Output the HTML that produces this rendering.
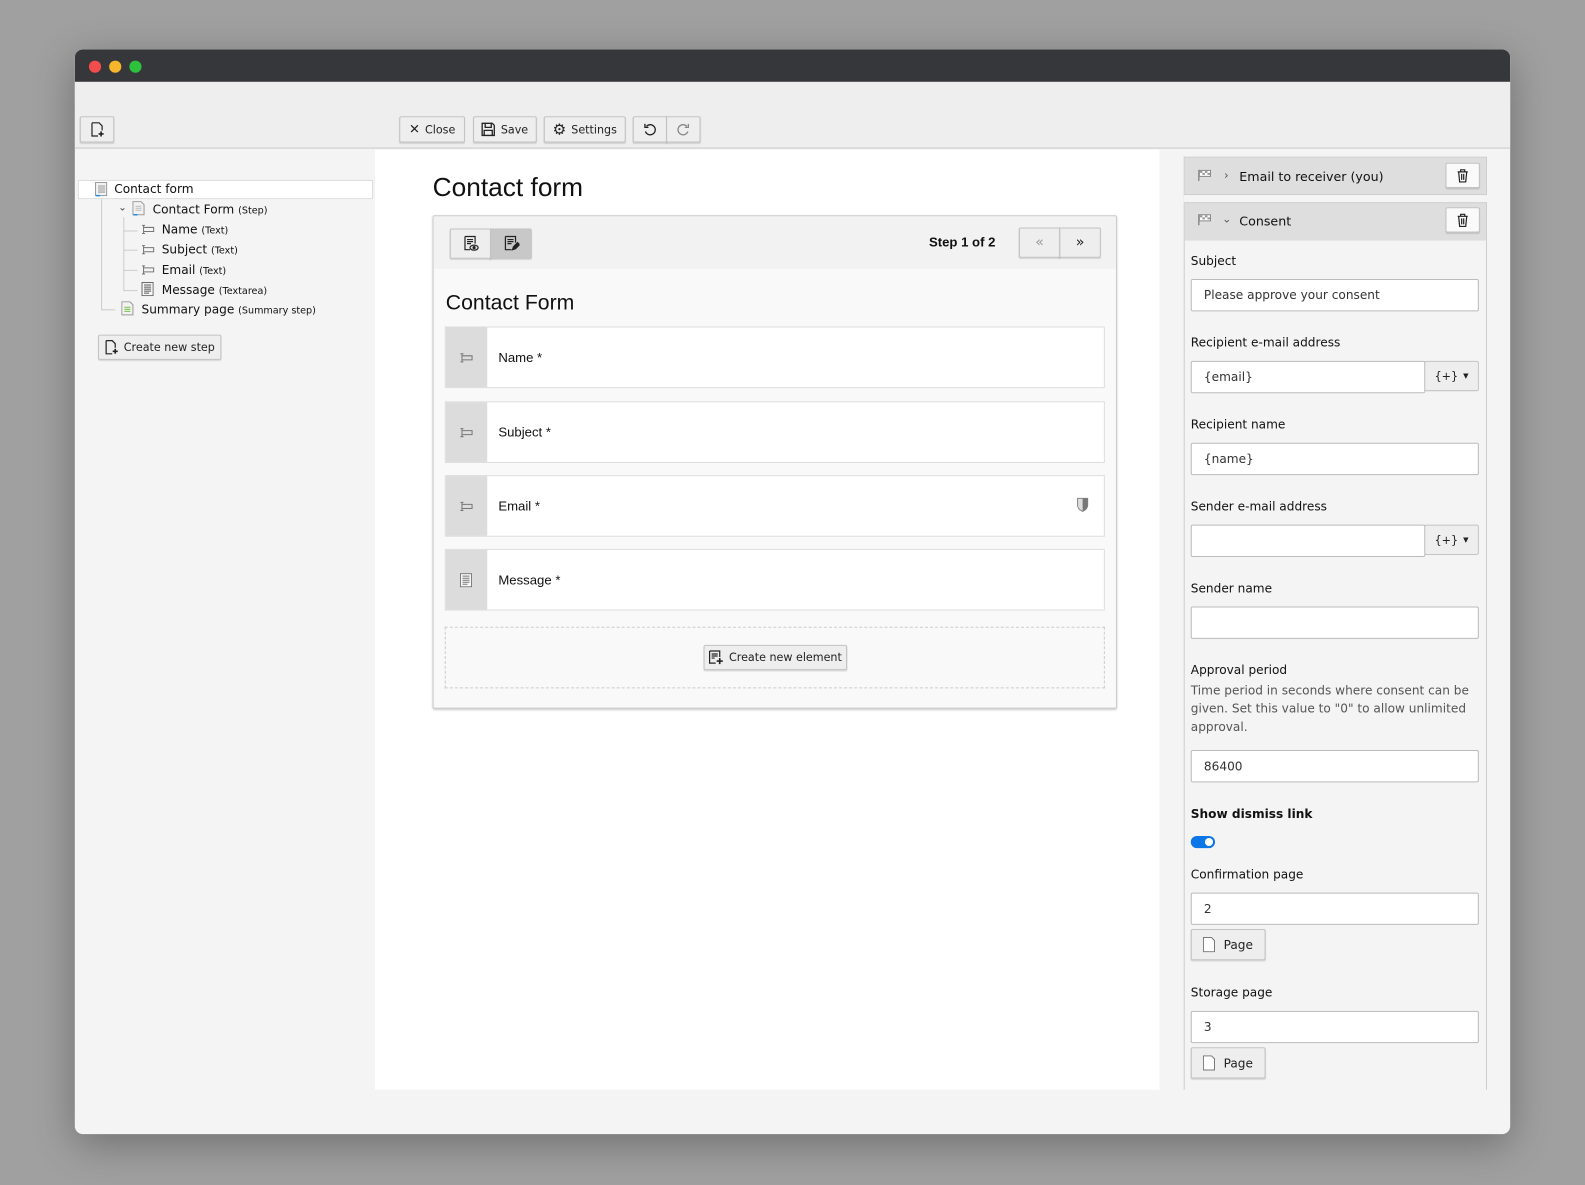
<!DOCTYPE html>
<html><head><meta charset="utf-8"><style>
*{box-sizing:border-box;margin:0;padding:0}
html,body{width:1585px;height:1185px;overflow:hidden;background:#a0a0a0}
#w{position:absolute;left:0;top:0;width:1568px;height:1172px;transform:scale(1.01084);transform-origin:0 0;font-family:"DejaVu Sans","Liberation Sans",sans-serif;font-size:12px;color:#111}
.a{position:absolute}
.win{left:74px;top:49px;width:1420px;height:1073px;border-radius:8px;overflow:hidden;background:#f4f4f4;box-shadow:0 10px 40px rgba(0,0,0,.3)}
.btn{position:absolute;background:#eee;border:1px solid #c3c3c3;border-radius:2px;height:26px;display:flex;align-items:center;justify-content:center;gap:5px;font-size:11px;color:#222;box-shadow:0 1px 1px rgba(0,0,0,.12)}
.lbl{position:absolute;left:1178px;font-size:12px}
.inp{position:absolute;left:1178px;width:285px;height:32px;background:#fff;border:1px solid #bbb;border-radius:2px;padding-left:12px;line-height:30px;font-size:12px;color:#333}
.el{position:absolute;left:440px;width:653px;height:61px;background:#fff;border:1px solid #ddd}
.el .s{position:absolute;left:0;top:0;width:41px;height:100%;background:#dcdcdc}
.el .t{position:absolute;left:52px;top:22px;font-family:"Liberation Sans",sans-serif;font-size:13px}
.tr{position:absolute;font-size:12px;white-space:nowrap}
.tr small{font-size:9.5px}
</style></head><body><div id="w">
<svg width="0" height="0" style="position:absolute"><defs><symbol id="ti" viewBox="0 0 14 10"><path d="M3 1v8M1.5 1h3M1.5 9h3M3 3h10v4H3" fill="none" stroke="#777"/></symbol><symbol id="fl" viewBox="0 0 14 12"><path d="M1 1v11" stroke="#666"/><path d="M1.5 1.5h11v6h-11z" fill="#fff" stroke="#888"/><path d="M2 2h2.5v2H2zM7 2h2.5v2H7zM4.5 4h2.5v2H4.5zM9.5 4h2.5v2H9.5z" fill="#999"/></symbol></defs></svg>
<div class="a win">
 <div class="a" style="left:0;top:0;width:1420px;height:32px;background:#36373a"></div>
 <div class="a" style="left:14px;top:11px;width:12px;height:12px;border-radius:50%;background:#f24c4c"></div>
 <div class="a" style="left:34px;top:11px;width:12px;height:12px;border-radius:50%;background:#f7b52c"></div>
 <div class="a" style="left:54px;top:11px;width:12px;height:12px;border-radius:50%;background:#2dc23c"></div>
 <div class="a" style="left:0;top:32px;width:1420px;height:66px;background:#eee;border-bottom:1px solid #c8c8c8"></div>
 <div class="a" style="left:297px;top:99px;width:776px;height:930px;background:#fff"></div>
 <div class="a" style="left:1097px;top:106px;width:300px;height:923px;border:1px solid #ccc;border-bottom:none;background:#f4f4f4"></div>
</div>
<div class="btn" style="left:79px;top:115px;width:34px"><svg width="16" height="16" viewBox="0 0 16 16" fill="none" stroke="#222" stroke-width="1.2"><path d="M3 1.5h7l3 3V9M3 1.5v13h6"/><path d="M12 10v5M9.5 12.5h5" stroke-width="1.6"/></svg></div>
<div class="btn" style="left:395px;top:115px;width:65px"><span style="font-weight:bold;font-size:13px">✕</span>Close</div>
<div class="btn" style="left:468px;top:115px;width:63px"><svg width="14" height="14" viewBox="0 0 14 14" fill="none" stroke="#222" stroke-width="1.3"><path d="M1 1h10l2 2v10H1z M4 1v4h6V1 M3 13V8h8v5"/></svg>Save</div>
<div class="btn" style="left:538px;top:115px;width:81px"><span style="font-size:15px;line-height:1">⚙</span>Settings</div>
<div class="btn" style="left:626px;top:115px;width:34px;border-radius:2px 0 0 2px"><svg width="14" height="14" viewBox="0 0 14 14" fill="none" stroke="#222" stroke-width="1.3"><path d="M3.5 4A5 5 0 1 1 2.5 9"/><path d="M2 1.5v3.5h3.5"/></svg></div>
<div class="btn" style="left:659px;top:115px;width:34px;border-radius:0 2px 2px 0"><svg width="14" height="14" viewBox="0 0 14 14" fill="none" stroke="#888" stroke-width="1.3"><path d="M10.5 4A5 5 0 1 0 11.5 9"/><path d="M12 1.5v3.5h-3.5"/></svg></div>
<div class="a" style="left:77px;top:178px;width:292px;height:19px;background:#fff;border:1px solid #ddd"></div>
<div class="a" style="left:100px;top:197px;width:1px;height:110px;background:#ccc"></div>
<div class="a" style="left:100px;top:306px;width:14px;height:1px;background:#ccc"></div>
<div class="a" style="left:122px;top:215px;width:1px;height:73px;background:#ccc"></div>
<div class="a" style="left:122px;top:228px;width:14px;height:1px;background:#ccc"></div>
<div class="a" style="left:122px;top:247px;width:14px;height:1px;background:#ccc"></div>
<div class="a" style="left:122px;top:267px;width:14px;height:1px;background:#ccc"></div>
<div class="a" style="left:122px;top:287px;width:14px;height:1px;background:#ccc"></div>
<svg class="a" style="left:94px;top:180px" width="13" height="15" viewBox="0 0 13 15"><rect x=".5" y=".5" width="11" height="13" fill="#f2f2f2" stroke="#999"/><path d="M3 4h7M3 6h7M3 8h7M3 10h7" stroke="#999"/><path d="M1 13.5h4" stroke="#1e8be6" stroke-width="1.5"/></svg>
<div class="tr" style="left:113px;top:180px">Contact form</div>
<div class="tr" style="left:117px;top:200px;font-size:10px;color:#444">⌄</div>
<svg class="a" style="left:131px;top:199px" width="13" height="15" viewBox="0 0 13 15"><path d="M.5.5h8l3 3v10H.5z" fill="#f2f2f2" stroke="#999"/><path d="M3 5h6M3 7h6M3 9h6" stroke="#bbb"/><path d="M1 13.5h4" stroke="#1e8be6" stroke-width="1.5"/></svg>
<div class="tr" style="left:151px;top:200px">Contact Form <small>(Step)</small></div>
<svg class="a" style="left:139px;top:222px" width="14" height="10"><use href="#ti"/></svg><div class="tr" style="left:160px;top:220px">Name <small>(Text)</small></div>
<svg class="a" style="left:139px;top:242px" width="14" height="10"><use href="#ti"/></svg><div class="tr" style="left:160px;top:240px">Subject <small>(Text)</small></div>
<svg class="a" style="left:139px;top:262px" width="14" height="10"><use href="#ti"/></svg><div class="tr" style="left:160px;top:260px">Email <small>(Text)</small></div>
<svg class="a" style="left:140px;top:279px" width="12" height="14" viewBox="0 0 12 14"><rect x=".5" y=".5" width="11" height="13" fill="#f8f8f8" stroke="#666"/><path d="M2.5 3h7M2.5 5h7M2.5 7h7M2.5 9h7M2.5 11h5" stroke="#555"/></svg>
<div class="tr" style="left:160px;top:280px">Message <small>(Textarea)</small></div>
<svg class="a" style="left:120px;top:298px" width="13" height="15" viewBox="0 0 13 15"><path d="M.5.5h8l3 3v10H.5z" fill="#f2f2f2" stroke="#999"/><path d="M3 6h6M3 8h6M3 10h6" stroke="#7bbf4a"/></svg>
<div class="tr" style="left:140px;top:299px">Summary page <small>(Summary step)</small></div>
<div class="btn" style="left:97px;top:331px;width:122px;height:25px"><svg width="14" height="15" viewBox="0 0 14 15" fill="none" stroke="#222" stroke-width="1.2"><path d="M2 1h6l3 3v4M2 1v13h6"/><path d="M11 9v5M8.5 11.5h5" stroke-width="1.6"/></svg>Create new step</div>
<div class="a" style="left:428px;top:170px;font-family:'Liberation Sans',sans-serif;font-size:26px;color:#111">Contact form</div>
<div class="a" style="left:428px;top:213px;width:677px;height:488px;background:#f9f9f9;border:1px solid #ccc;border-radius:2px;box-shadow:0 1px 2px rgba(0,0,0,.2)"></div>
<div class="a" style="left:429px;top:214px;width:675px;height:52px;background:#f2f2f2"></div>
<div class="btn" style="left:445px;top:226px;width:41px;height:30px;border-radius:2px 0 0 2px"><svg width="16" height="16" viewBox="0 0 16 16" fill="none" stroke="#222" stroke-width="1.2"><path d="M2 1h10v7M2 1v13h5M4 4h6M4 6h6M4 8h4"/><ellipse cx="11" cy="12" rx="4" ry="2.5"/><circle cx="11" cy="12" r="1" fill="#222"/></svg></div>
<div class="btn" style="left:485px;top:226px;width:41px;height:30px;background:#c8c8c8;border-radius:0 2px 2px 0"><svg width="16" height="16" viewBox="0 0 16 16" fill="none" stroke="#222" stroke-width="1.2"><path d="M2 1h10v6M2 1v13h6M4 4h6M4 6h6M4 8h4"/><path d="M9 14l1-3 4-4 2 2-4 4z" fill="#222"/></svg></div>
<div class="a" style="left:919px;top:232px;font-family:'Liberation Sans',sans-serif;font-weight:bold;font-size:13px">Step 1 of 2</div>
<div class="btn" style="left:1008px;top:225px;width:41px;height:30px;color:#999;font-size:14px;border-radius:2px 0 0 2px">«</div>
<div class="btn" style="left:1048px;top:225px;width:41px;height:30px;font-size:14px;border-radius:0 2px 2px 0">»</div>
<div class="a" style="left:441px;top:288px;font-family:'Liberation Sans',sans-serif;font-size:21px">Contact Form</div>
<div class="el" style="top:323px"><div class="s"><svg class="a" style="left:13px;top:25px" width="14" height="10"><use href="#ti"/></svg></div><div class="t">Name *</div></div>
<div class="el" style="top:397px"><div class="s"><svg class="a" style="left:13px;top:25px" width="14" height="10"><use href="#ti"/></svg></div><div class="t">Subject *</div></div>
<div class="el" style="top:470px"><div class="s"><svg class="a" style="left:13px;top:25px" width="14" height="10"><use href="#ti"/></svg></div><div class="t">Email *</div><svg class="a" style="left:624px;top:21px" width="12" height="15" viewBox="0 0 12 15"><path d="M1 1h10v7c0 3-3 5-5 6-2-1-5-3-5-6z" fill="#ddd" stroke="#888"/><path d="M6 1v13c2-1 5-3 5-6V1z" fill="#777"/></svg></div>
<div class="el" style="top:543px"><div class="s"><svg class="a" style="left:14px;top:23px" width="12" height="14" viewBox="0 0 12 14"><rect x=".5" y=".5" width="11" height="13" fill="#f8f8f8" stroke="#777"/><path d="M2.5 3h7M2.5 5h7M2.5 7h7M2.5 9h7M2.5 11h5" stroke="#777"/></svg></div><div class="t">Message *</div></div>
<div class="a" style="left:440px;top:620px;width:653px;height:61px;border:1px dashed #ccc"></div>
<div class="btn" style="left:696px;top:638px;width:142px;height:25px"><svg width="15" height="15" viewBox="0 0 15 15" fill="none" stroke="#222" stroke-width="1.2"><path d="M1 1h10v6M1 1v12h6M3 4h6M3 6h6M3 8h3"/><path d="M11 8v6M8 11h6" stroke-width="1.6"/></svg>Create new element</div>
<div class="a" style="left:1172px;top:156px;width:298px;height:37px;background:#dedede;border-bottom:1px solid #ccc"></div>
<div class="a" style="left:1172px;top:200px;width:298px;height:38px;background:#dedede;border-top:1px solid #ccc"></div>
<div class="a" style="left:1171px;top:193px;width:300px;height:7px;background:#f4f4f4"></div>
<svg class="a" style="left:1185px;top:167px" width="14" height="12"><use href="#fl"/></svg>
<div class="a" style="left:1211px;top:167px;font-size:11px;color:#555">›</div>
<div class="a" style="left:1226px;top:167px;font-size:12.5px">Email to receiver (you)</div>
<div class="btn" style="left:1430px;top:161px;width:34px;height:25px;background:#fafafa"><svg width="12" height="14" viewBox="0 0 12 14" fill="none" stroke="#222" stroke-width="1.2"><path d="M1 3h10M4 3V1h4v2M2 3l1 10h6l1-10M5 5v6M7 5v6"/></svg></div>
<svg class="a" style="left:1185px;top:211px" width="14" height="12"><use href="#fl"/></svg>
<div class="a" style="left:1209px;top:210px;font-size:11px;color:#555">⌄</div>
<div class="a" style="left:1226px;top:211px;font-size:12.5px">Consent</div>
<div class="btn" style="left:1430px;top:205px;width:34px;height:25px;background:#fafafa"><svg width="12" height="14" viewBox="0 0 12 14" fill="none" stroke="#222" stroke-width="1.2"><path d="M1 3h10M4 3V1h4v2M2 3l1 10h6l1-10M5 5v6M7 5v6"/></svg></div>
<div class="lbl" style="top:251px">Subject</div>
<div class="inp" style="top:276px">Please approve your consent</div>
<div class="lbl" style="top:332px">Recipient e-mail address</div>
<div class="inp" style="top:357px;width:232px">{email}</div>
<div class="btn" style="left:1409px;top:357px;width:54px;height:30px;box-shadow:none;font-size:11px">{+} <span style="font-size:7px">▼</span></div>
<div class="lbl" style="top:413px">Recipient name</div>
<div class="inp" style="top:438px">{name}</div>
<div class="lbl" style="top:494px">Sender e-mail address</div>
<div class="inp" style="top:519px;width:232px"></div>
<div class="btn" style="left:1409px;top:519px;width:54px;height:30px;box-shadow:none;font-size:11px">{+} <span style="font-size:7px">▼</span></div>
<div class="lbl" style="top:575px">Sender name</div>
<div class="inp" style="top:600px"></div>
<div class="lbl" style="top:656px">Approval period</div>
<div class="lbl" style="top:674px;width:285px;line-height:18px;color:#555">Time period in seconds where consent can be given. Set this value to "0" to allow unlimited approval.</div>
<div class="inp" style="top:742px">86400</div>
<div class="lbl" style="top:798px;font-weight:bold">Show dismiss link</div>
<div class="a" style="left:1178px;top:827px;width:24px;height:12px;border-radius:6px;background:#0a76e8"></div>
<div class="a" style="left:1192px;top:829px;width:8px;height:8px;border-radius:50%;background:#fff"></div>
<div class="lbl" style="top:858px">Confirmation page</div>
<div class="inp" style="top:883px">2</div>
<div class="btn" style="left:1178px;top:919px;width:74px;height:31px;font-size:12px;gap:8px"><svg width="12" height="15" viewBox="0 0 12 15" fill="#fff" stroke="#777"><path d="M.5.5h8l3 3v11H.5z"/></svg>Page</div>
<div class="lbl" style="top:975px">Storage page</div>
<div class="inp" style="top:1000px">3</div>
<div class="btn" style="left:1178px;top:1036px;width:74px;height:31px;font-size:12px;gap:8px"><svg width="12" height="15" viewBox="0 0 12 15" fill="#fff" stroke="#777"><path d="M.5.5h8l3 3v11H.5z"/></svg>Page</div>
</div></body></html>
